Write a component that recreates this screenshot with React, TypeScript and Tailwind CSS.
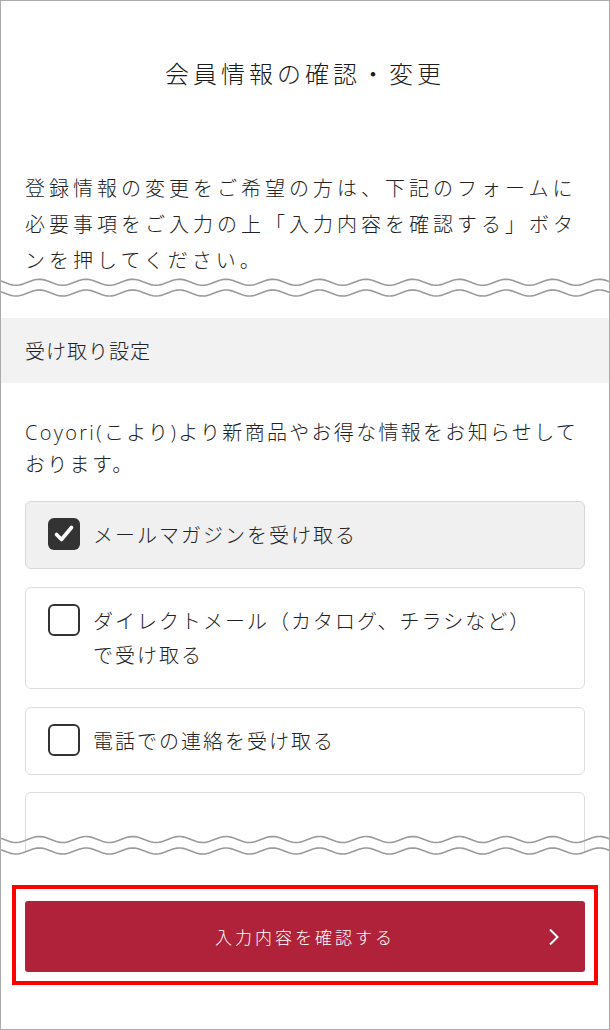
import React from 'react';

const jp = "font-['Noto_Sans_CJK_JP',sans-serif]";

// sine wave as polyline points, used for the "cut" marks
function wavePoints(y: number, width = 612, amp = 3, period = 46.67, start = 3.33) {
  const pts: string[] = [];
  for (let x = 0; x <= width; x += 2) {
    const v = y + amp * Math.sin((2 * Math.PI * (x - start)) / period);
    pts.push(`${x},${v.toFixed(2)}`);
  }
  return pts;
}

function WaveCut({ y1, y2, height, fillBelow = false }: { y1: number; y2: number; height: number; fillBelow?: boolean }) {
  const p1 = wavePoints(y1);
  const p2 = wavePoints(y2);
  return (
    <svg width="100%" height={height} viewBox={`0 0 608 ${height}`} preserveAspectRatio="none" className="block">
      {fillBelow && <polygon points={[...p2, `612,${height}`, `0,${height}`].join(' ')} fill="#ffffff" />}
      <polyline points={p1.join(' ')} fill="none" stroke="#9a9a9a" strokeWidth="1.6" />
      <polyline points={p2.join(' ')} fill="none" stroke="#9a9a9a" strokeWidth="1.6" />
    </svg>
  );
}

function Checkbox({ checked }: { checked: boolean }) {
  if (checked) {
    return (
      <div className="w-[32px] h-[32px] shrink-0 rounded-[6px] bg-[#333333] flex items-center justify-center">
        <svg width="32" height="32" viewBox="0 0 32 32">
          <path d="M8.5 16.5 L13.5 21.5 L23.5 9.5" fill="none" stroke="#ffffff" strokeWidth="3.6" strokeLinecap="round" strokeLinejoin="round" />
        </svg>
      </div>
    );
  }
  return <div className="w-[32px] h-[32px] shrink-0 rounded-[6px] border-2 border-[#333333] bg-white" />;
}

const options = [
  { label: 'メールマガジンを受け取る', checked: true },
  { label: 'ダイレクトメール（カタログ、チラシなど）で受け取る', checked: false },
  { label: '電話での連絡を受け取る', checked: false },
];

export default function App() {
  return (
    <div className={`w-[610px] h-[1030px] box-border border border-[#ababab] bg-white overflow-hidden flex flex-col text-[#222222] font-light ${jp}`}>
      <h1 className="pt-[54px] text-center text-[24px] leading-[36px] tracking-[4px] text-[#1a1a1a] font-light">
        会員情報の確認・変更
      </h1>

      <p className="mt-[79px] px-[24px] text-[20px] leading-[36px] tracking-[4px]">
        登録情報の変更をご希望の方は、下記のフォームに必要事項をご入力の上「入力内容を確認する」ボタンを押してください。
      </p>

      <WaveCut y1={4.3} y2={15} height={40} />

      <div className="h-[65px] bg-[#f2f2f2] px-[24px] flex items-center text-[20px] tracking-[1px]">
        受け取り設定
      </div>

      <p className="mt-[34px] px-[24px] text-[20px] leading-[32px] tracking-[2.3px] font-['Open_Sans','Noto_Sans_CJK_JP',sans-serif]">
        Coyori(こより)より新商品やお得な情報をお知らせしております。
      </p>

      <div className="mt-[20px] mx-[24px] flex flex-col gap-[18px]">
        {options.map((o) => (
          <label
            key={o.label}
            className={`flex items-start gap-[13px] rounded-[6px] border pl-[22px] pr-[40px] py-[16px] ${
              o.checked ? 'bg-[#f0f0f0] border-[#d8d8d8]' : 'bg-white border-[#dddddd]'
            }`}
          >
            <Checkbox checked={o.checked} />
            <span className="text-[20px] leading-[34px] tracking-[2px]">{o.label}</span>
          </label>
        ))}
      </div>

      {/* next card, cut off by the wave mark */}
      <div className="relative mt-[17px] h-[78px] overflow-hidden">
        <div className="mx-[24px] h-[120px] rounded-[6px] border border-[#dddddd] bg-white" />
        <div className="absolute left-0 right-0 bottom-0">
          <WaveCut y1={5.5} y2={17} height={36} fillBelow />
        </div>
      </div>

      <div className="mt-[15px] mx-[11px] border-4 border-[#ff0000] pt-[12px] pb-[9px] px-[9px]">
        <button className="relative w-full h-[71px] rounded-[3px] bg-[#b0223a] flex items-center justify-center text-white text-[17px] tracking-[3px] font-light">
          入力内容を確認する
          <svg className="absolute right-[25px] top-[27px]" width="12" height="18" viewBox="0 0 12 18">
            <path d="M2 1.5 L9.5 9 L2 16.5" fill="none" stroke="#ffffff" strokeWidth="2" />
          </svg>
        </button>
      </div>
    </div>
  );
}
